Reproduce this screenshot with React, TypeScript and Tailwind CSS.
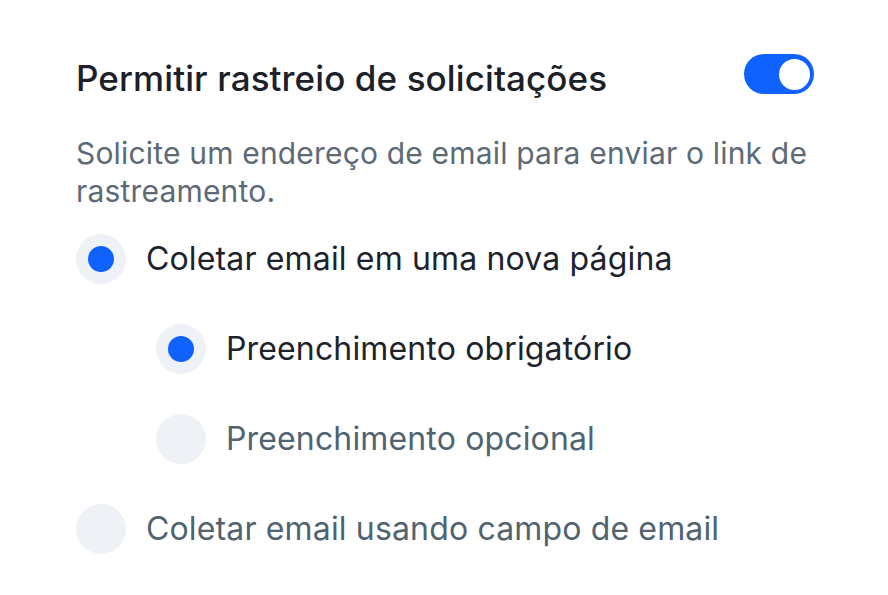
import { useState } from "react";

type Opt = { id: string; label: string; indent?: boolean };

const options: Opt[] = [
  { id: "new-page", label: "Coletar email em uma nova página" },
  { id: "required", label: "Preenchimento obrigatório", indent: true },
  { id: "optional", label: "Preenchimento opcional", indent: true },
  { id: "field", label: "Coletar email usando campo de email" },
];

export default function App() {
  const [enabled, setEnabled] = useState(true);
  const selected = ["new-page", "required"];

  return (
    <div
      className="w-[888px] h-[595px] bg-white pl-[76px] pr-[74px] pt-[54px]"
      style={{ fontFamily: "Inter, 'Noto Sans', sans-serif" }}
    >
      <div className="flex items-start justify-between">
        <h2 className="mt-[4px] text-[35px] font-medium text-[#1b2029] leading-[40px] tracking-[0.1px]">
          Permitir rastreio de solicitações
        </h2>
        <button
          onClick={() => setEnabled(!enabled)}
          className={`w-[70px] h-[40px] rounded-full px-[4px] flex items-center ${enabled ? "bg-[#0f62fe] justify-end" : "bg-[#d7dde4] justify-start"}`}
        >
          <span className="w-[31px] h-[31px] rounded-full bg-white block" />
        </button>
      </div>

      <p className="mt-[36px] text-[30px] leading-[38px] text-[#5b6a76] tracking-[0.18px]">
        Solicite um endereço de email para enviar o link de rastreamento.
      </p>

      <div className="mt-[24px] flex flex-col gap-[40px]">
        {options.map((o) => {
          const on = selected.includes(o.id);
          return (
            <label
              key={o.id}
              className={`flex items-center gap-[20px] ${o.indent ? "pl-[80px]" : ""}`}
            >
              <span className="w-[50px] h-[50px] rounded-full bg-[#eef1f5] flex items-center justify-center shrink-0">
                {on && <span className="w-[26px] h-[26px] rounded-full bg-[#0f62fe]" />}
              </span>
              <span
                className={`text-[32px] leading-[40px] tracking-[0.15px] ${on ? "text-[#1d232c]" : "text-[#506370]"}`}
              >
                {o.label}
              </span>
            </label>
          );
        })}
      </div>
    </div>
  );
}
